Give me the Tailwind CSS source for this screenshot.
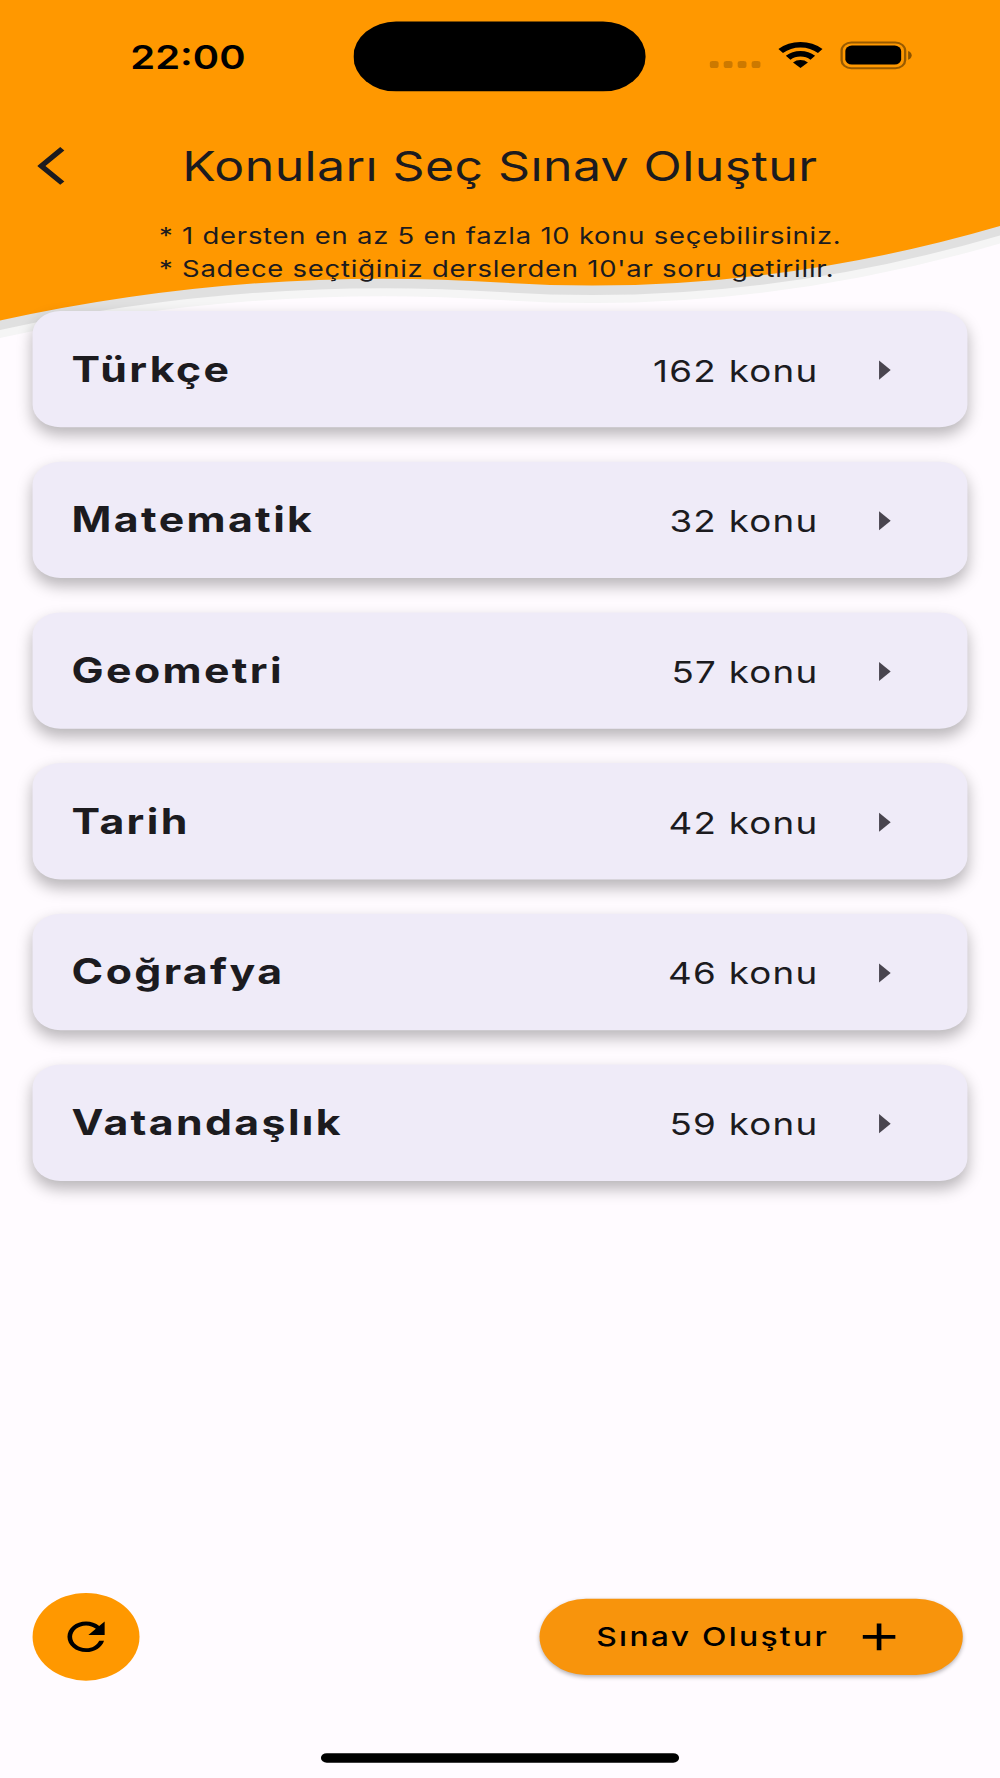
<!DOCTYPE html>
<html lang="tr">
  <head>
    <meta charset="UTF-8" />
    <meta name="viewport" content="width=device-width, initial-scale=1.0" />
    <title>Konuları Seç Sınav Oluştur</title>
    <script src="https://cdn.jsdelivr.net/npm/@tailwindcss/browser@4"></script>
  </head>

  <body class="w-[1000px] h-[1778px] overflow-hidden bg-[#fffbff]">
    <!-- 430x932 phone screen, stretched to fill the page -->
    <div
      class="relative flex flex-col w-[430px] h-[932px] origin-top-left scale-x-[2.32558] scale-y-[1.90773] bg-[#fffbff] text-[#1c1b1f] font-[Inter,'Liberation_Sans',sans-serif]"
    >
      <!-- wave -->
      <svg
        class="absolute top-0 left-0 w-full h-[180px]"
        viewBox="0 0 1000 343.4"
        preserveAspectRatio="none"
      >
        <path d="M0 0V338Q250 283.500 500 300T1000 243.500V0z" fill="#f5f5f5" />
        <path d="M0 0V330Q250 275.500 500 292T1000 235.500V0z" fill="#e0e0e0" />
        <path d="M0 0V320.500Q250 266 500 282.500T1000 226V0z" fill="#ff9800" />
      </svg>

      <!-- status bar -->
      <div class="relative flex items-center h-[59px] text-black">
        <div class="w-[152.2px] pl-[56px] pt-[0.4px] text-[17.2px] font-semibold">22:00</div>
        <svg class="w-[125.6px] h-[37px]" viewBox="0 0 125.6 37">
          <rect y="0.3" width="125.6" height="36.7" rx="18.3" />
        </svg>
        <svg class="ml-[27.2px] -mt-px w-[89px] h-[16px]" viewBox="305 21 89 16">
          <g fill="#000" fill-opacity=".2">
            <rect x="305.2" y="32" width="3.8" height="3.7" rx="1.2" />
            <rect x="311.2" y="32" width="3.8" height="3.7" rx="1.2" />
            <rect x="317.2" y="32" width="3.8" height="3.7" rx="1.2" />
            <rect x="323.2" y="32" width="3.8" height="3.7" rx="1.2" />
          </g>
          <g fill="none" stroke="#000" stroke-width="2.9">
            <path d="M335.7 26.700A12.600 12.600 0 0 1 352.700 26.700" />
            <path d="M338.900 30.300A7.800 7.800 0 0 1 349.500 30.300" />
          </g>
          <path d="M344.200 35.700L341 32.700A4.600 4.600 0 0 1 347.400 32.700z" />
          <rect
            x="361.9"
            y="22.3"
            width="27.3"
            height="13.5"
            rx="4.2"
            fill="none"
            stroke="#000"
            stroke-opacity=".4"
          />
          <rect x="363.5" y="23.9" width="24" height="9.9" rx="2.8" />
          <path d="M390.500 26.700a2.500 2.500 0 0 1 0 4.600z" fill-opacity=".45" />
        </svg>
      </div>

      <!-- app bar -->
      <div class="relative flex items-center h-[56px]">
        <svg class="ml-[16px] w-[24px] h-[24px]" viewBox="0 0 24 24" fill="currentColor">
          <path d="M11.670 3.870L9.900 2.100 0 12l9.900 9.900 1.770-1.770L3.540 12z" />
        </svg>
        <h1 class="ml-[38.4px] pt-px text-[21.5px] tracking-[0.17px] whitespace-nowrap">Konuları Seç Sınav Oluştur</h1>
      </div>
      <div class="relative pl-[68.4px] pt-[1.4px] text-[11.8px] leading-[16.8px] tracking-[0.33px] whitespace-nowrap">
        <p>* 1 dersten en az 5 en fazla 10 konu seçebilirsiniz.</p>
        <p>* Sadece seçtiğiniz derslerden 10'ar soru getirilir.</p>
      </div>

      <!-- lessons -->
      <div class="lessons relative flex flex-col gap-[18px] mt-[13px] px-[14px]"></div>

      <!-- bottom buttons -->
      <div class="mt-auto flex items-center justify-between pl-[14px] pr-[16px] mb-[37.5px] text-black">
        <button class="flex items-center justify-center w-[46px] h-[46px] rounded-full bg-[#ff9800]">
          <svg class="w-[24px] h-[24px]" viewBox="0 0 24 24">
            <path
              d="M17.650 6.350C16.200 4.900 14.210 4 12 4c-4.420 0-7.990 3.580-7.990 8s3.570 8 7.990 8c3.730 0 6.840-2.550 7.730-6h-2.080c-.820 2.330-3.040 4-5.650 4-3.310 0-6-2.690-6-6s2.690-6 6-6c1.660 0 3.140.690 4.220 1.780L13 11h7V4l-2.350 2.350z"
            />
          </svg>
        </button>
        <button
          class="flex items-center justify-between w-[182px] h-[40px] pl-[24.4px] pr-[24px] rounded-full bg-[#f8940c] shadow-[0_1px_2px_rgba(0,0,0,0.3)]"
        >
          <span class="pt-[0.8px] text-[13.7px] font-medium tracking-[0.98px] whitespace-nowrap">Sınav Oluştur</span>
          <svg class="w-[24px] h-[24px]" viewBox="0 0 24 24">
            <path d="M19 13h-6v6h-2v-6H5v-2h6V5h2v6h6v2z" />
          </svg>
        </button>
      </div>
      <div class="mx-auto mb-[8px] w-[154px] h-[5.3px] rounded-full bg-black"></div>
    </div>

    <script>
      let lessons = [
        ['Türkçe', 162],
        ['Matematik', 32],
        ['Geometri', 57],
        ['Tarih', 42],
        ['Coğrafya', 46],
        ['Vatandaşlık', 59],
      ];
      let list = document.querySelector('.lessons');
      lessons.forEach(function (lesson) {
        list.innerHTML += `
          <div class="flex items-center h-[61px] pl-[16.8px] pr-[24px] rounded-[12px] bg-[#efebf8] shadow-[0_4px_7px_rgba(0,0,0,0.28)]">
            <h2 class="grow text-[18.4px] font-bold tracking-[1.02px]">${lesson[0]}</h2>
            <p class="mr-[16px] pt-[1.8px] text-[15.8px] tracking-[0.55px]">${lesson[1]} konu</p>
            <svg class="mt-[0.7px] w-[24px] h-[24px]" viewBox="0 0 24 24" fill="#49454f">
              <path d="M10 17l5-5-5-5v10z" />
            </svg>
          </div>`;
      });
    </script>
  </body>
</html>
